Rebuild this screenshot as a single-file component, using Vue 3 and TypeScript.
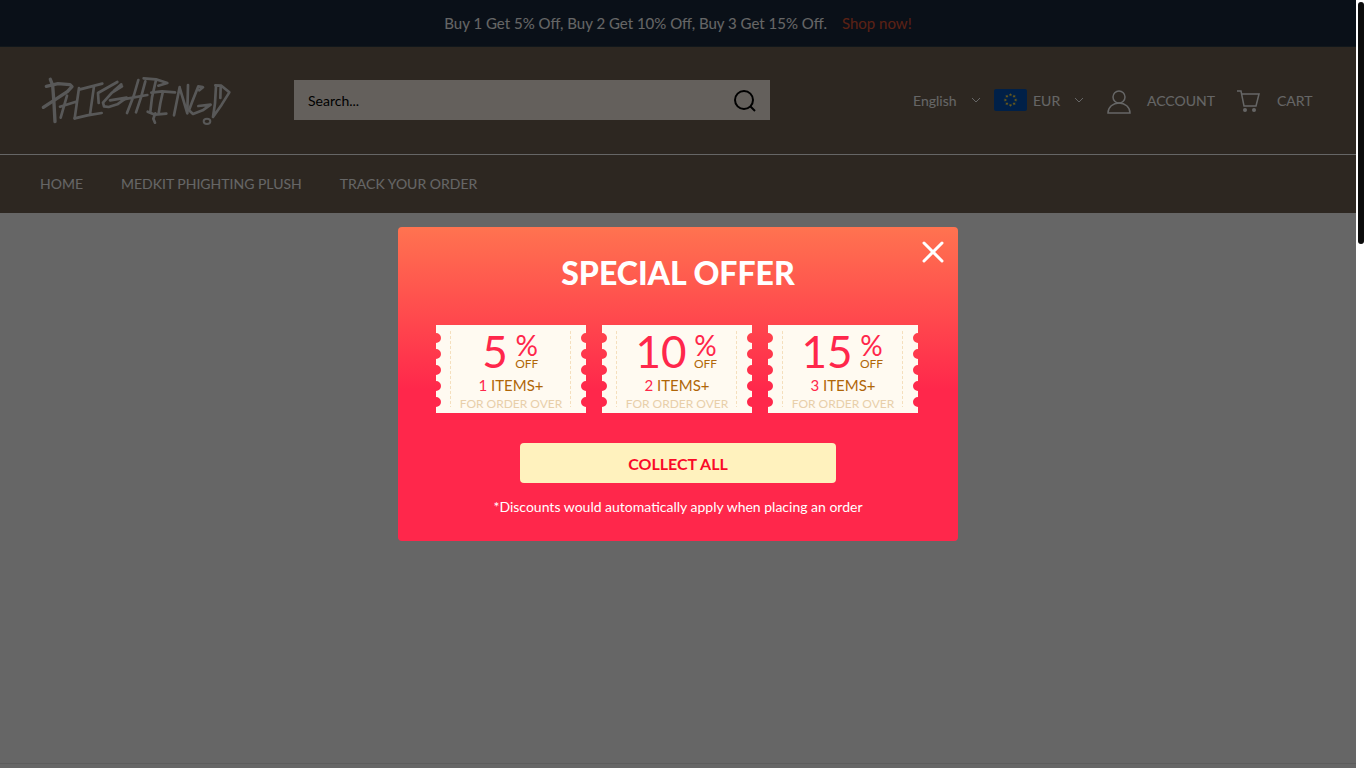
<script setup lang="ts">
import { ref } from 'vue'

interface Coupon {
  percent: number
  items: number
}

const coupons: Coupon[] = [
  { percent: 5, items: 1 },
  { percent: 10, items: 2 },
  { percent: 15, items: 3 },
]

const links: string[] = ['HOME', 'MEDKIT PHIGHTING PLUSH', 'TRACK YOUR ORDER']
const stars: number[] = [0, 45, 90, 135, 180, 225, 270, 315]
const query = ref('')
const open = ref(true)
const language = ref('English')
const currency = ref('EUR')
</script>

<template>
  <div class="shell">
    <div class="page">
      <div class="promo">
        <span>Buy 1 Get 5% Off, Buy 2 Get 10% Off, Buy 3 Get 15% Off.</span>
        <a href="#">Shop now!</a>
      </div>

      <header class="header">
        <a class="logo" href="#" aria-label="Phighting">
          <svg viewBox="30 42 600 159" fill="none" stroke="#dcdcdc" stroke-linecap="round" stroke-linejoin="round">
            <g stroke-width="10">
              <path d="M61 58L68 76L72 130L75 185" />
              <path d="M49 79L84 71L120 74L126 80L112 95L40 142" />
            </g>
            <g stroke-width="8">
              <path d="M111 107L92 173M147 84L134 175M90 140L138 125" />
              <path d="M134 175L172 166L215 159M150 88L217 71M192 79L180 163" />
              <path d="M206 129L204 99L262 66M274 73L252 92" />
              <path d="M276 79L246 98L219 128L222 139L236 141L262 133L290 113L240 121" />
              <path d="M325 60L312 105L291 159M346 64L333 112L318 157M275 119L352 105" />
              <path d="M341 55L378 58L412 69L385 77M378 60L366 112L361 155M364 98L396 94L435 97" />
              <path d="M398 98L391 130L386 160M353 155L375 164L409 161M376 160L370 176L375 188" />
              <path d="M449 81L432 166M449 83L472 160M474 75L472 160" />
              <path d="M518 81L505 79L486 127L477 151L489 162L518 151L542 134L505 138M519 82L508 91" />
              <path d="M556 76L574 77L598 97L575 134L549 171M558 78L555 130L549 171M572 82L571 114" />
              <ellipse cx="531" cy="184" rx="10" ry="8" stroke-width="6" />
            </g>
          </svg>
        </a>

        <form class="search" role="search" @submit.prevent>
          <input v-model="query" type="text" placeholder="Search..." aria-label="Search" />
          <button type="submit" aria-label="Submit search">
            <svg width="22" height="22" viewBox="0 0 22 22" fill="none" stroke="#000" stroke-width="2">
              <circle cx="10" cy="11" r="9" />
              <path d="M16 17l5 5" />
            </svg>
          </button>
        </form>

        <div class="tools">
          <label class="pick language">
            <select v-model="language" aria-label="Language">
              <option>English</option>
            </select>
            <svg class="chevron" viewBox="0 0 10 6"><path d="M1 1l4 4 4-4" /></svg>
          </label>
          <label class="pick currency">
            <svg class="flag" viewBox="0 0 33 22">
              <rect width="33" height="22" rx="2" fill="#0052b4" />
              <path
                v-for="angle in stars"
                :key="angle"
                :transform="`rotate(${angle} 16.5 11)`"
                d="M16.5 4L17 5.2L18.2 5.3L17.3 6.1L17.5 7.2L16.5 6.6L15.5 7.2L15.7 6.1L14.8 5.3L16 5.2Z"
                fill="#ffda44"
              />
            </svg>
            <select v-model="currency" aria-label="Currency">
              <option>EUR</option>
            </select>
            <svg class="chevron" viewBox="0 0 10 6"><path d="M1 1l4 4 4-4" /></svg>
          </label>
          <a class="tool account" href="#">
            <svg width="24" height="27" viewBox="0 -3 24 27" fill="none" stroke="#fff" stroke-width="1.5">
              <circle cx="12" cy="7" r="6" />
              <path d="M1 23c0-6 5-10 11-10s11 4 11 10z" />
            </svg>
            <span>ACCOUNT</span>
          </a>
          <a class="tool cart" href="#">
            <svg width="24" height="27" viewBox="0 -3 24 27" fill="none" stroke="#fff" stroke-width="1.5">
              <path d="M0 1h4l3 15h12l3-12H5" />
              <circle cx="8" cy="20" r="2" fill="#fff" stroke="none" />
              <circle cx="17" cy="20" r="2" fill="#fff" stroke="none" />
            </svg>
            <span>CART</span>
          </a>
        </div>
      </header>

      <nav class="nav">
        <a v-for="link in links" :key="link" href="#">{{ link }}</a>
      </nav>

      <main class="content"></main>

      <div v-if="open" class="overlay">
        <section class="dialog" role="dialog" aria-modal="true" aria-labelledby="offer-title">
          <button class="close" type="button" aria-label="Close" @click="open = false">
            <svg width="22" height="22" viewBox="0 0 22 22" stroke="#fff" stroke-width="3" stroke-linecap="round">
              <path d="M2 2l18 18M20 2L2 20" />
            </svg>
          </button>
          <h2 id="offer-title">SPECIAL OFFER</h2>
          <ul class="coupons">
            <li v-for="coupon in coupons" :key="coupon.percent">
              <svg class="ticket" viewBox="0 0 150 88">
                <path
                  d="M0 0H150V8a5 5 0 0 0 0 10v6a5 5 0 0 0 0 10v6a5 5 0 0 0 0 10v6a5 5 0 0 0 0 10v6a5 5 0 0 0 0 10V88H0V82a5 5 0 0 0 0-10v-6a5 5 0 0 0 0-10v-6a5 5 0 0 0 0-10v-6a5 5 0 0 0 0-10v-6a5 5 0 0 0 0-10z"
                  fill="#fffaf1"
                />
                <path d="M14.5 6V82M134.5 6V82" stroke="#f5dfbd" stroke-dasharray="3 2" />
              </svg>
              <div class="amount">
                <strong>{{ coupon.percent }}</strong>
                <span class="unit"><span class="sign">%</span><span class="off">OFF</span></span>
              </div>
              <div class="items"><em>{{ coupon.items }}</em> ITEMS+</div>
              <div class="over">FOR ORDER OVER</div>
            </li>
          </ul>
          <button class="collect" type="button">COLLECT ALL</button>
          <p>*Discounts would automatically apply when placing an order</p>
        </section>
      </div>
    </div>
    <div class="track" aria-hidden="true"><div class="thumb"></div></div>
  </div>
</template>

<style>
body {
  margin: 0;
  background: #fff;
}
</style>

<style scoped>
.shell {
  display: flex;
  height: 100vh;
  overflow: hidden;
  font-family: Lato, sans-serif;
  font-size: 14px;
  color: #fff;
}
.shell * {
  box-sizing: border-box;
}
a {
  color: inherit;
  text-decoration: none;
}
button,
input,
select {
  border: 0;
  padding: 0;
  margin: 0;
  background: none;
  font: inherit;
  color: inherit;
}
svg {
  display: block;
  flex: none;
}
.page {
  position: relative;
  display: flex;
  flex: 1;
  flex-direction: column;
  min-width: 0;
}
.promo {
  display: flex;
  justify-content: center;
  align-items: center;
  gap: 15px;
  height: 47px;
  border-bottom: 1px solid #2b3a44;
  background: #19283c;
  font-size: 15px;
}
.promo a {
  color: #e15535;
}
.header {
  display: flex;
  align-items: center;
  height: 108px;
  padding: 0 40px 1px;
  border-bottom: 1px solid #fff;
  background: #706253;
}
.logo {
  width: 200px;
  margin-right: 54px;
}
.logo svg {
  width: 100%;
}
.search {
  display: flex;
  align-items: center;
  flex: 0 1 476px;
  height: 40px;
  padding: 0 14px;
  background: #faf0e6;
  color: #000;
}
.search input {
  flex: 1;
  min-width: 0;
  height: 100%;
  outline: 0;
}
.search svg {
  overflow: visible;
}
.search input::placeholder {
  color: #000;
  opacity: 1;
}
.tools {
  display: flex;
  align-items: center;
  margin-left: auto;
}
.pick {
  display: flex;
  align-items: center;
}
.pick select {
  appearance: none;
}
.language {
  margin-right: 13px;
}
.language select {
  width: 58px;
}
.currency {
  margin-right: 23px;
}
.currency select {
  width: 41px;
}
.flag {
  width: 33px;
  height: 22px;
  margin-right: 6px;
}
.chevron {
  width: 10px;
  height: 6px;
  fill: none;
  stroke: #fff;
}
.tool {
  display: flex;
  align-items: center;
  gap: 16px;
}
.account {
  margin-right: 19px;
}
.account span {
  min-width: 71px;
}
.cart span {
  min-width: 39px;
}
.nav {
  display: flex;
  align-items: center;
  gap: 38px;
  height: 58px;
  padding: 0 40px 1px;
  background: #706253;
}
.content {
  flex: 1;
  margin-bottom: 4px;
  border-bottom: 1px solid #e6e6e6;
}
.overlay {
  position: absolute;
  inset: 0;
  display: grid;
  place-items: center;
  background: rgba(0, 0, 0, 0.6);
}
.dialog {
  position: relative;
  width: 560px;
  padding: 26px 38px 24px;
  border-radius: 4px;
  background: linear-gradient(#ff7350, #ff274b 52%);
  text-align: center;
}
.close {
  position: absolute;
  top: 14px;
  right: 14px;
}
h2 {
  margin: 0 0 32px;
  font-size: 32px;
  line-height: 40px;
  font-weight: 900;
}
.coupons {
  display: flex;
  gap: 16px;
  margin: 0 2px 30px 0;
  padding: 0;
  list-style: none;
}
.coupons li {
  position: relative;
  flex: 1;
  height: 88px;
}
.ticket {
  position: absolute;
  inset: 0;
  width: 100%;
  height: 100%;
}
.amount,
.items,
.over {
  position: relative;
}
.amount {
  display: flex;
  justify-content: center;
  gap: 6px;
  height: 52px;
  color: #ff274b;
}
.amount strong {
  font-size: 44px;
  line-height: 52px;
  font-weight: 400;
}
.unit {
  display: flex;
  flex-direction: column;
  align-items: center;
  min-width: 26px;
  padding-top: 6px;
}
.sign {
  font-size: 28px;
  line-height: 28px;
}
.off {
  font-size: 12px;
  line-height: 10px;
  color: #b06608;
}
.items {
  font-size: 15px;
  line-height: 17px;
  color: #b06608;
}
.items em {
  font-style: normal;
  color: #ff274b;
}
.over {
  font-size: 12px;
  line-height: 20px;
  color: #e8cfaa;
}
.collect {
  display: block;
  width: 316px;
  height: 40px;
  margin: 0 auto;
  border-radius: 4px;
  background: #fff2be;
  color: #fa0a28;
  font-size: 16px;
  font-weight: 700;
}
p {
  margin: 14px 0 0;
  font-size: 14px;
  line-height: 20px;
}
.track {
  width: 10px;
  padding: 2px;
  background: #fff;
}
.thumb {
  height: 242px;
  border-radius: 3px;
  background: #0c0c0c;
}
</style>
